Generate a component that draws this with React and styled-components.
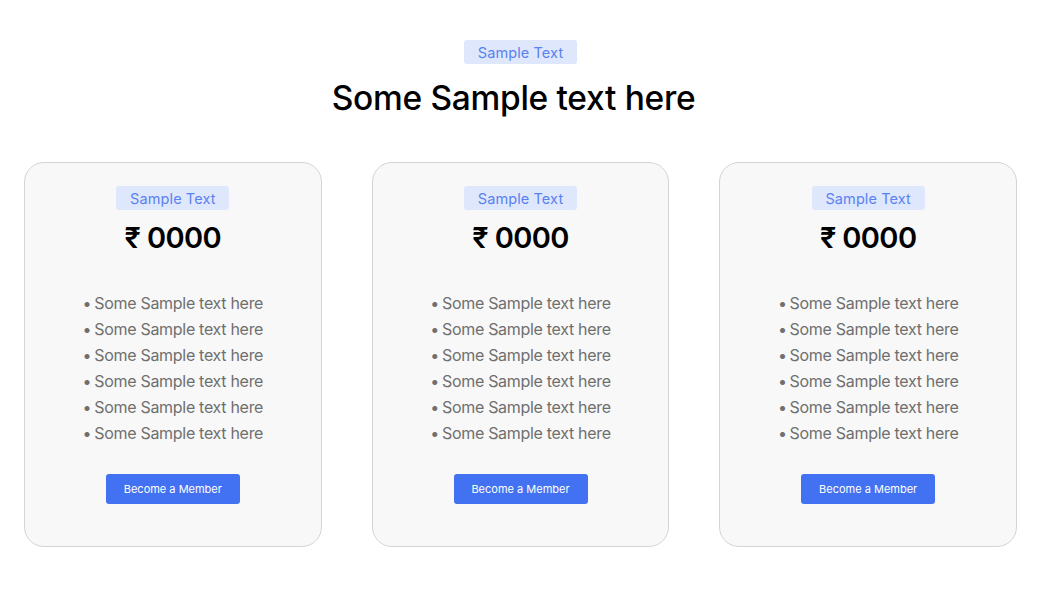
import React from "react";
import styled, { createGlobalStyle } from "styled-components";

const Global = createGlobalStyle`
  html, body { margin: 0; padding: 0; background: #ffffff; }
  body { font-family: "Inter", "Noto Sans", sans-serif; }
  * { box-sizing: border-box; }
`;

const Page = styled.main`
  padding: 40px 24px 0 24px;
  display: flex;
  flex-direction: column;
  align-items: center;
`;

const Badge = styled.span`
  display: inline-flex;
  align-items: center;
  justify-content: center;
  height: 24px;
  width: 113px;
  background: #dfe7fd;
  color: #5a82ef;
  font-size: 14.5px;
  border-radius: 3px;
  letter-spacing: 0.1px;
`;

const Heading = styled.h1`
  margin: 14px 0 0;
  padding-right: 14px;
  font-size: 33.5px;
  line-height: 40px;
  font-weight: 500;
  color: #000;
  letter-spacing: -0.3px;
`;

const Cards = styled.section`
  margin-top: 44px;
  width: 100%;
  display: flex;
  gap: 50px;
`;

const Card = styled.article`
  flex: 1;
  height: 385px;
  background: #f8f8f8;
  border: 1px solid #d4d4d4;
  border-radius: 20px;
  padding-top: 23px;
  display: flex;
  flex-direction: column;
  align-items: center;
`;

const Price = styled.div`
  margin-top: 10px;
  font-size: 29px;
  line-height: 36px;
  font-weight: 600;
  color: #000;
  letter-spacing: -0.6px;
`;

const List = styled.ul`
  margin: 34px 0 0;
  padding: 0;
  list-style: none;
`;

const Item = styled.li`
  font-size: 16px;
  line-height: 26px;
  color: #6f6f6f;
  letter-spacing: -0.3px;
  &::before {
    content: "•";
    margin-right: 3px;
  }
`;

const Button = styled.button`
  margin-top: 28px;
  width: 134px;
  height: 30px;
  border: none;
  border-radius: 3px;
  background: #4272f1;
  color: #ffffff;
  font-family: inherit;
  font-size: 11px;
  cursor: pointer;
`;

const plans = [1, 2, 3];
const items = [1, 2, 3, 4, 5, 6];

export default function App() {
  return (
    <>
      <Global />
      <Page>
        <Badge>Sample Text</Badge>
        <Heading>Some Sample text here</Heading>
        <Cards>
          {plans.map((p) => (
            <Card key={p}>
              <Badge>Sample Text</Badge>
              <Price>₹ 0000</Price>
              <List>
                {items.map((i) => (
                  <Item key={i}>Some Sample text here</Item>
                ))}
              </List>
              <Button>Become a Member</Button>
            </Card>
          ))}
        </Cards>
      </Page>
    </>
  );
}
